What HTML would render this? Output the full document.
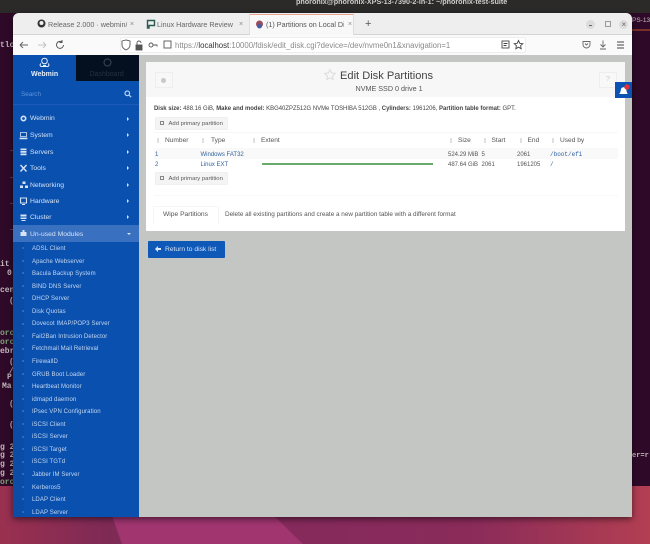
<!DOCTYPE html>
<html><head><meta charset="utf-8"><style>
html,body{margin:0;padding:0;width:650px;height:544px;overflow:hidden;background:#8a2a5c}
*{box-sizing:border-box}
body{font-family:"Liberation Sans",sans-serif;position:relative;filter:blur(.3px)}
.a{position:absolute}
.t{position:absolute;white-space:nowrap;line-height:12px}
.m{position:absolute;white-space:nowrap;line-height:10px;font-family:"Liberation Mono",monospace;font-size:8px;font-weight:bold;color:#c4b8bf}
.n{color:#d5e3f6;font-size:6.8px;left:30px}
.s{color:#c4d7f2;font-size:6px;left:32px;letter-spacing:.1px}
.d{position:absolute;left:22px;width:2px;height:2px;background:#3f74c0;border-radius:50%}
.ar{position:absolute;left:127px;width:0;height:0;border-left:2.5px solid #d5e3f6;border-top:2px solid transparent;border-bottom:2px solid transparent}
.c{color:#555;font-size:6px}
.h{color:#555;font-size:6.6px}
.l{color:#2f5f9e;font-size:6px}
.sv{position:absolute;overflow:visible}
.btn{position:absolute;background:#f3f4f3;border:1px solid #eff0ef;border-radius:1px;color:#5a5a5a;font-size:5.9px;line-height:12px;white-space:nowrap}
.so{position:absolute;top:138px;width:2px;height:5px;background:#e0e0e0}
</style></head><body>
<div class="a" style="inset:0;background:linear-gradient(90deg,#9a3050 0,#7f2a55 16%,#862a5c 50%,#8a2b5a 72%,#b23f52 100%)"></div>
<svg class="sv" style="left:0;top:510px" width="650" height="34"><polygon points="110,0 268,0 303,34 122,34" fill="#a03570"/></svg>
<div class="a" style="left:0;top:0;width:650px;height:486px;background:#2f0a28"></div>
<div class="a" style="left:0;top:0;width:650px;height:13px;background:#2b2a29"></div>
<div class="a" style="left:632px;top:29px;width:18px;height:2px;background:#7a2e2a"></div>
<div class="t" style="left:296px;top:-4px;font-size:7.200px;color:#cfcdcb;font-weight:bold">phoronix@phoronix-XPS-13-7390-2-in-1: ~/phoronix-test-suite</div>
<div class="t" style="left:632px;top:15px;font-size:6.500px;color:#c8bcc4">PS-13-</div>
<div class="m" style="left:0;top:41px">tlo</div>
<div class="a" style="left:10px;top:150px;width:3px;height:1px;background:#5a3a50"></div>
<div class="a" style="left:10px;top:177px;width:3px;height:1px;background:#5a3a50"></div>
<div class="a" style="left:10px;top:203px;width:3px;height:1px;background:#5a3a50"></div>
<div class="a" style="left:10px;top:229px;width:3px;height:1px;background:#5a3a50"></div>
<div class="m" style="left:0;top:260px">it</div><div class="m" style="left:7px;top:269px">0</div>
<div class="m" style="left:0;top:286px">cen</div><div class="m" style="left:9px;top:297px">(</div>
<div class="m" style="left:0;top:329px;color:#7fa07a">oro</div><div class="m" style="left:0;top:338px;color:#7fa07a">oro</div>
<div class="m" style="left:0;top:347px">ebr</div><div class="m" style="left:9px;top:358px">(</div><div class="m" style="left:9px;top:367px">/</div>
<div class="m" style="left:7px;top:373px">P</div><div class="m" style="left:2px;top:382px">Ma</div>
<div class="m" style="left:9px;top:400px">(</div><div class="m" style="left:9px;top:421px">(</div>
<div class="m" style="left:0;top:443px">g 2</div><div class="m" style="left:0;top:451px">g 2</div><div class="m" style="left:0;top:460px">g 2</div><div class="m" style="left:0;top:469px">g 2</div>
<div class="m" style="left:0;top:478px;color:#7fa07a">oro</div>
<div class="m" style="left:632px;top:451px;font-size:7px">er=r</div>

<div class="a" style="left:13px;top:13px;width:619px;height:504px;border-radius:6px 6px 0 0;background:#c4c6c4;box-shadow:0 2px 7px rgba(0,0,0,.55);overflow:hidden">
<div class="a" style="left:0;top:0;width:619px;height:22px;background:#eeeeee;border-bottom:1px solid #d4d4d4"></div>
<div class="a" style="left:236px;top:1px;width:105px;height:22px;background:#f8f8f8;border-top:1px solid #e9a58f;border-left:1px solid #ddd;border-right:1px solid #ddd"></div>
<div class="a" style="left:0;top:22px;width:619px;height:20px;background:#fafafa"></div>
<div class="a" style="left:107px;top:24px;width:406px;height:16px;background:#fff;border:1px solid #eee;border-radius:2px"></div>
</div>
<svg class="sv" style="left:37px;top:19px" width="10" height="10"><circle cx="4.500" cy="4.500" r="4" fill="#333"/><circle cx="4.500" cy="4" r="2" fill="#eee"/></svg>
<div class="t" style="left:48px;top:19px;font-size:7.200px;color:#666;width:79px;overflow:hidden">Release 2.000 · webmin/</div>
<div class="t" style="left:130px;top:19px;font-size:7px;color:#888">×</div>
<svg class="sv" style="left:146px;top:19px" width="10" height="10"><path d="M1.500 1.500h7v5h-5.500v2.500h-1.500z" fill="none" stroke="#2a5a50" stroke-width="1.400"/></svg>
<div class="t" style="left:157px;top:19px;font-size:7.200px;color:#666;width:78px;overflow:hidden">Linux Hardware Review</div>
<div class="t" style="left:239px;top:19px;font-size:7px;color:#888">×</div>
<svg class="sv" style="left:255px;top:20px" width="9" height="9"><circle cx="4.500" cy="4" r="3.500" fill="#a04a5a"/><circle cx="4.500" cy="6" r="2.500" fill="#4a5aa0"/></svg>
<div class="t" style="left:266px;top:19px;font-size:7.200px;color:#555;width:78px;overflow:hidden">(1) Partitions on Local Di</div>
<div class="t" style="left:348px;top:19px;font-size:7px;color:#888">×</div>
<div class="t" style="left:365px;top:18px;font-size:11px;color:#555">+</div>
<div class="a" style="left:586px;top:20px;width:9px;height:9px;border-radius:50%;background:#dcdcdc"></div>
<div class="a" style="left:589px;top:24.500px;width:3px;height:1px;background:#666"></div>
<div class="a" style="left:605px;top:21px;width:6px;height:6px;border:1px solid #999"></div>
<div class="a" style="left:619px;top:20px;width:9px;height:9px;border-radius:50%;background:#dcdcdc"></div>
<div class="t" style="left:621.500px;top:18.500px;font-size:8px;color:#666">×</div>

<svg class="sv" style="left:20px;top:39px" width="50" height="12" fill="none" stroke-width="1"><path d="M0 6h8M0 6l3-3M0 6l3 3" stroke="#666"/><path d="M18 6h8M26 6l-3-3M26 6l-3 3" stroke="#c4c4c4"/><path d="M42 3a3.500 3.500 0 1 0 1.500 3M42 1v2.500h-2.500" stroke="#555"/></svg>
<svg class="sv" style="left:122px;top:39px" width="50" height="12" fill="none" stroke="#555" stroke-width=".9"><path d="M0 2l4-1 4 1v4c0 2.500-2 4-4 5-2-1-4-2.500-4-5z"/><rect x="14" y="6" width="6" height="5" fill="#555"/><path d="M15 6V4a2 2 0 0 1 4 0"/><circle cx="29" cy="6" r="2"/><path d="M31 6h4v1.500"/><rect x="42" y="2" width="7" height="7"/></svg>
<div class="t" style="left:175px;top:39.500px;font-size:7.800px;color:#8a8a8a">https://<span style="color:#333">localhost</span>:10000/fdisk/edit_disk.cgi?device=/dev/nvme0n1&amp;xnavigation=1</div>
<svg class="sv" style="left:501px;top:39px" width="24" height="12" fill="none" stroke="#444" stroke-width=".9"><rect x="1" y="2" width="7" height="7"/><path d="M2.500 4.500h4M2.500 6.500h3"/><path d="M17.500 1.500l1.300 2.800 3 .4-2.200 2 .6 3-2.700-1.500-2.700 1.500.6-3-2.200-2 3-.4z"/></svg>
<svg class="sv" style="left:583px;top:39px" width="46" height="12" fill="none" stroke="#666" stroke-width=".9"><path d="M0 2.500h7v3a3.500 3.500 0 0 1-7 0z"/><path d="M2 4.500l1.500 1.500 1.500-1.500"/><path d="M20 1.500v6M17.500 5.500l2.500 2.500 2.500-2.500M17 10h6"/><path d="M34 3h7M34 6h7M34 9h7" stroke="#444"/></svg>

<div class="a" style="left:13px;top:55px;width:126px;height:462px;background:#0a50ae;overflow:hidden"></div>
<div class="a" style="left:76px;top:55px;width:63px;height:26px;background:#04101f"></div>
<svg class="sv" style="left:39px;top:57px" width="11" height="11" fill="none" stroke="#e6eefb" stroke-width="1"><circle cx="5.500" cy="4" r="2.800"/><path d="M2 6.500c-1.500 1-1 3 .5 3h6c1.500 0 2-2 .5-3M4 8.500h3"/></svg>
<div class="t" style="left:31px;top:69px;font-size:7px;color:#e4eefb;font-weight:bold">Webmin</div>
<svg class="sv" style="left:103px;top:58px" width="9" height="9" fill="none" stroke="#3a4552"><circle cx="4.500" cy="4.500" r="3.500"/></svg>
<div class="t" style="left:89.500px;top:69px;font-size:7px;color:#25313f">Dashboard</div>
<div class="t" style="left:21px;top:89px;font-size:6.300px;color:#5f95dc">Search</div>
<svg class="sv" style="left:124px;top:90px" width="8" height="8" fill="none" stroke="#b9d2f3" stroke-width="1.200"><circle cx="3.300" cy="3.300" r="2.300"/><path d="M5 5l2.200 2.200"/></svg>
<div class="a" style="left:13px;top:104px;width:126px;height:1px;background:#1c5cb8"></div>
<div class="a" style="left:13px;top:225px;width:126px;height:17px;background:#3a70c0"></div>
<div class="a" style="left:13px;top:242px;width:11px;height:275px;background:#0a4ca6"></div>

<div class="t n" style="top:113px">Webmin</div><div class="t n" style="top:130px">System</div><div class="t n" style="top:146.500px">Servers</div><div class="t n" style="top:163px">Tools</div><div class="t n" style="top:179.500px">Networking</div><div class="t n" style="top:196px">Hardware</div><div class="t n" style="top:212px">Cluster</div><div class="t n" style="top:228.500px">Un-used Modules</div>
<svg class="sv" style="left:0;top:0" width="30" height="240" fill="#d5e3f6">
<circle cx="23.500" cy="118.500" r="2.200" fill="none" stroke="#d5e3f6" stroke-width="1.600"/>
<path d="M20.500 132.500h6v4h-6zM20 138h7v.8h-7z" fill="none" stroke="#d5e3f6" stroke-width=".8"/>
<path d="M20.500 148.500h6v1.800h-6zM20.500 151h6v1.800h-6zM20.500 153.500h6v1.800h-6z"/>
<path d="M20.500 165l6 6.500M26.500 165l-6 6.500" stroke="#d5e3f6" stroke-width="1.400"/>
<path d="M22.500 181.500h3v2.500h-3zM20 185.500h3v2.500h-3zM25 185.500h3v2.500h-3z"/>
<path d="M20.500 198h6v5h-6z" fill="none" stroke="#d5e3f6" stroke-width="1.100"/><path d="M22 204h3v1h-3z"/>
<path d="M20.500 214.500h6v2h-6zM20.500 217.500h6v1.500h-6zM21.500 220h4v1h-4z"/>
<path d="M20.500 232h2v-2h2v2h2v4h-6z"/>
</svg>
<div class="ar" style="top:116.500px"></div><div class="ar" style="top:133px"></div><div class="ar" style="top:149.500px"></div><div class="ar" style="top:166px"></div><div class="ar" style="top:182.500px"></div><div class="ar" style="top:199px"></div><div class="ar" style="top:215px"></div>
<div class="a" style="left:126.500px;top:232.500px;border-top:2.500px solid #d5e3f6;border-left:2px solid transparent;border-right:2px solid transparent"></div>

<div class="t s" style="top:243px">ADSL Client</div><div class="t s" style="top:255.600px">Apache Webserver</div><div class="t s" style="top:268.100px">Bacula Backup System</div><div class="t s" style="top:280.700px">BIND DNS Server</div><div class="t s" style="top:293.200px">DHCP Server</div><div class="t s" style="top:305.800px">Disk Quotas</div><div class="t s" style="top:318.300px">Dovecot IMAP/POP3 Server</div><div class="t s" style="top:330.900px">Fail2Ban Intrusion Detector</div><div class="t s" style="top:343.400px">Fetchmail Mail Retrieval</div><div class="t s" style="top:356px">FirewallD</div><div class="t s" style="top:368.500px">GRUB Boot Loader</div><div class="t s" style="top:381.100px">Heartbeat Monitor</div><div class="t s" style="top:393.600px">idmapd daemon</div><div class="t s" style="top:406.200px">IPsec VPN Configuration</div><div class="t s" style="top:418.700px">iSCSI Client</div><div class="t s" style="top:431.300px">iSCSI Server</div><div class="t s" style="top:443.800px">iSCSI Target</div><div class="t s" style="top:456.400px">iSCSI TGTd</div><div class="t s" style="top:468.900px">Jabber IM Server</div><div class="t s" style="top:481.500px">Kerberos5</div><div class="t s" style="top:494px">LDAP Client</div><div class="t s" style="top:506.600px;height:10.400px;overflow:hidden">LDAP Server</div>
<div class="d" style="top:247px"></div><div class="d" style="top:260px"></div><div class="d" style="top:272px"></div><div class="d" style="top:285px"></div><div class="d" style="top:297px"></div><div class="d" style="top:310px"></div><div class="d" style="top:323px"></div><div class="d" style="top:335px"></div><div class="d" style="top:348px"></div><div class="d" style="top:360px"></div><div class="d" style="top:373px"></div><div class="d" style="top:385px"></div><div class="d" style="top:398px"></div><div class="d" style="top:410px"></div><div class="d" style="top:423px"></div><div class="d" style="top:436px"></div><div class="d" style="top:448px"></div><div class="d" style="top:461px"></div><div class="d" style="top:473px"></div><div class="d" style="top:486px"></div><div class="d" style="top:498px"></div><div class="d" style="top:511px"></div>

<div class="a" style="left:146px;top:62px;width:479px;height:169px;background:#fff"></div>
<div class="a" style="left:146px;top:62px;width:479px;height:35px;background:#f6f7f6"></div>
<div class="a" style="left:155px;top:72px;width:18px;height:16px;background:#f8f8f8;border:1px solid #eeeeee"></div>
<div class="a" style="left:161px;top:78px;width:5px;height:5px;border-radius:50%;background:#c8c8c8"></div>
<div class="a" style="left:599px;top:72px;width:18px;height:16px;background:#f8f8f8;border:1px solid #eeeeee"></div>
<div class="t" style="left:606px;top:74px;font-size:7px;color:#c8c8c8">?</div>
<svg class="sv" style="left:324px;top:69px" width="12" height="12" fill="none" stroke="#dcdcdc"><path d="M6 .5l1.600 3.400 3.700.5-2.700 2.500.7 3.600L6 8.700l-3.300 1.800.7-3.600L.7 4.400l3.700-.5z"/></svg>
<div class="t" style="left:340px;top:70px;font-size:11.100px;color:#444">Edit Disk Partitions</div>
<div class="t" style="left:355.500px;top:83px;font-size:7.200px;color:#555">NVME SSD 0 drive 1</div>
<div class="a" style="left:615px;top:82px;width:17px;height:16px;background:#0a52b4"></div>
<svg class="sv" style="left:617px;top:83px" width="14" height="14"><path d="M2 11c1.500-1 1.500-3 2-5s4-2.500 5 0 .5 4 2 5z" fill="#fff"/><circle cx="10" cy="4" r="2.700" fill="#e0303a"/></svg>

<div class="t" style="left:154px;top:103px;font-size:5.960px;color:#444"><b>Disk size:</b> 488.16 GiB, <b>Make and model:</b> KBG40ZPZ512G NVMe TOSHIBA 512GB , <b>Cylinders:</b> 1961206, <b>Partition table format:</b> GPT.</div>
<div class="btn" style="left:154.500px;top:117px;width:73px;height:13px;padding-left:13px">Add primary partition</div>
<div class="a" style="left:160px;top:121px;width:4px;height:4px;border:1px solid #888"></div>
<div class="a" style="left:154px;top:132px;width:464px;height:16px;border-top:1px solid #f7f7f7"></div>
<div class="a" style="left:154px;top:148px;width:464px;height:11px;background:#f8f9f8"></div>
<div class="so" style="left:157px"></div><div class="so" style="left:202px"></div><div class="so" style="left:253px"></div><div class="so" style="left:450px"></div><div class="so" style="left:484px"></div><div class="so" style="left:520px"></div><div class="so" style="left:552px"></div>
<div class="t h" style="left:165px;top:135px">Number</div><div class="t h" style="left:211px;top:135px">Type</div><div class="t h" style="left:261px;top:135px">Extent</div><div class="t h" style="left:458px;top:135px">Size</div><div class="t h" style="left:491.500px;top:135px">Start</div><div class="t h" style="left:527.500px;top:135px">End</div><div class="t h" style="left:560px;top:135px">Used by</div>
<div class="t c" style="left:155px;top:148.500px;color:#2f5f9e">1</div><div class="t l" style="left:200.500px;top:148.500px">Windows FAT32</div><div class="t c" style="left:448px;top:148.500px">524.29 MiB</div><div class="t c" style="left:481.500px;top:148.500px">5</div><div class="t c" style="left:517px;top:148.500px">2061</div><div class="t l" style="left:550px;top:148.500px;font-family:'Liberation Mono',monospace">/boot/efi</div>
<div class="t c" style="left:155px;top:159px;color:#2f5f9e">2</div><div class="t l" style="left:200.500px;top:159px">Linux EXT</div><div class="a" style="left:262px;top:163px;width:171px;height:2px;background:#6aa96a"></div><div class="t c" style="left:448px;top:159px">487.64 GiB</div><div class="t c" style="left:481.500px;top:159px">2061</div><div class="t c" style="left:517px;top:159px">1961205</div><div class="t l" style="left:550px;top:159px;font-family:'Liberation Mono',monospace">/</div>
<div class="btn" style="left:154.500px;top:172px;width:73px;height:13px;padding-left:13px">Add primary partition</div>
<div class="a" style="left:160px;top:176px;width:4px;height:4px;border:1px solid #888"></div>
<div class="a" style="left:154px;top:195px;width:464px;height:1px;background:#f8f8f8"></div>
<div class="a" style="left:153px;top:206px;width:66px;height:19px;border:1px solid #f6f6f6;border-bottom:none;background:#fff"></div>
<div class="t" style="left:163px;top:209px;font-size:6.700px;color:#555">Wipe Partitions</div>
<div class="t" style="left:225px;top:209px;font-size:6.360px;color:#555">Delete all existing partitions and create a new partition table with a different format</div>
<div class="a" style="left:148px;top:240.500px;width:77px;height:17px;background:#0e58b8;border-radius:1px"></div>
<svg class="sv" style="left:154px;top:245px" width="8" height="8"><path d="M1 4l3-3v2h3v2H4v2z" fill="#dbe8f8"/></svg>
<div class="t" style="left:165px;top:244px;font-size:6.700px;color:#d5e3f6">Return to disk list</div>
</body></html>
